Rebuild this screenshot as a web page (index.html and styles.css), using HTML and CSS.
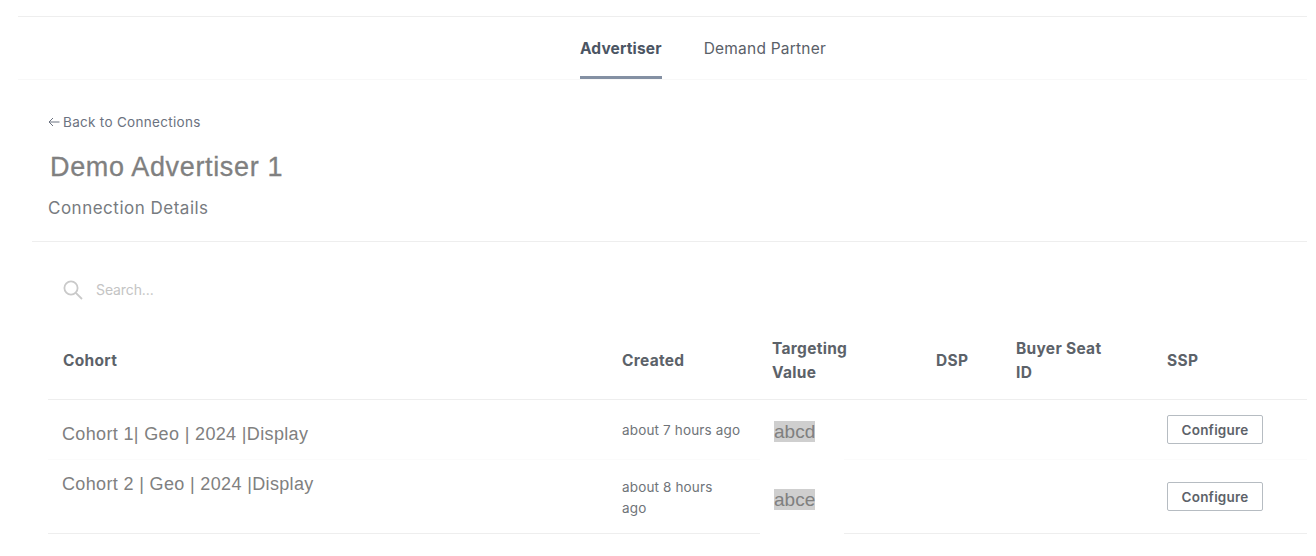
FILE: index.html
```html
<!DOCTYPE html>
<html lang="en">
<head>
    <meta charset="UTF-8">
    <meta name="viewport" content="width=device-width, initial-scale=1.0">
    <title>Connection Details</title>
    <link rel="stylesheet" href="styles.css">
</head>
<body>
    <nav class="tabs">
        <a class="tab active">Advertiser</a>
        <a class="tab">Demand Partner</a>
    </nav>

    <div class="content">
        <a class="back-link"><svg class="back-arrow" width="12" height="10" viewBox="0 0 12 10" fill="none" stroke="#6b7280" stroke-width="1"><path d="M11.5 5H1M5 1L1 5l4 4"/></svg>Back to Connections</a>
        <h1 class="page-title">Demo Advertiser 1</h1>
        <h2 class="page-subtitle">Connection Details</h2>
    </div>

    <div class="details">
        <div class="search">
            <svg width="20" height="20" viewBox="0 0 20 20" fill="none" stroke="#c9c9c9" stroke-width="1.8"><circle cx="8" cy="8" r="6.6"/><path d="M12.8 12.8L19 19"/></svg>
            <span class="search-text">Search...</span>
        </div>

        <table class="cohorts">
            <thead>
                <tr>
                    <th class="col-cohort">Cohort</th>
                    <th class="col-created">Created</th>
                    <th class="col-value">Targeting<br>Value</th>
                    <th class="col-dsp">DSP</th>
                    <th class="col-seat">Buyer Seat<br>ID</th>
                    <th class="col-ssp">SSP</th>
                </tr>
            </thead>
            <tbody>
                <tr class="row-one">
                    <td class="cohort-name">Cohort 1| Geo | 2024 |Display</td>
                    <td class="created">about 7 hours ago</td>
                    <td class="value-cell"><mark class="value">abcd</mark></td>
                    <td></td>
                    <td></td>
                    <td><button class="configure">Configure</button></td>
                </tr>
                <tr class="row-two">
                    <td class="cohort-name">Cohort 2 | Geo | 2024 |Display</td>
                    <td class="created">about 8 hours<br>ago</td>
                    <td class="value-cell"><mark class="value">abce</mark></td>
                    <td></td>
                    <td></td>
                    <td><button class="configure">Configure</button></td>
                </tr>
            </tbody>
        </table>
    </div>
</body>
</html>
```

FILE: styles.css
```css
body {
    margin: 0;
    padding: 16px 9px 0 0;
    font-family: 'Inter', 'Liberation Sans', sans-serif;
    color: #4b5563;
    background: #fff;
}
.tabs {
    display: flex;
    gap: 42px;
    height: 62px;
    margin-left: 18px;
    padding-left: 562px;
    border-top: 1px solid #eeeeee;
    border-bottom: 1px solid #f8f8f8;
}
.tab {
    display: block;
    height: 59px;
    line-height: 64px;
    font-size: 15.5px;
    letter-spacing: 0.22px;
    color: #5a6068;
}
.tab.active {
    font-weight: 700;
    letter-spacing: 0.15px;
    color: #4b5563;
    border-bottom: 3px solid #8490a3;
}
.content {
    padding: 32px 0 0 48px;
}
.back-link {
    display: flex;
    align-items: center;
    gap: 3px;
    height: 20px;
    font-size: 13.5px;
    letter-spacing: 0.3px;
    color: #6b7280;
}
.page-title {
    margin: 19px 0 0 2px;
    height: 32px;
    line-height: 32px;
    font-family: 'Liberation Sans', sans-serif;
    font-size: 27px;
    font-weight: 400;
    letter-spacing: 0.65px;
    color: #808080;
    -webkit-text-stroke: 0.3px #808080;
}
.page-subtitle {
    margin: 13px 0 0;
    height: 24px;
    line-height: 24px;
    font-size: 17px;
    font-weight: 400;
    letter-spacing: 0.5px;
    color: #777b80;
}
.details {
    margin: 21px 0 0 32px;
    padding: 0 0 0 16px;
    border-top: 1px solid #eeeeee;
}
.search {
    display: flex;
    align-items: center;
    gap: 13px;
    box-sizing: border-box;
    height: 87px;
    padding: 8px 0 0 15px;
}
.search-text {
    font-size: 14px;
    letter-spacing: -0.1px;
    color: #c4c4c4;
}
.cohorts {
    width: 100%;
    table-layout: fixed;
    border-collapse: collapse;
}
.cohorts th {
    height: 64px;
    padding: 0 0 6px;
    text-align: left;
    vertical-align: middle;
    font-size: 15.5px;
    line-height: 24px;
    font-weight: 700;
    letter-spacing: 0.3px;
    color: #5c6269;
    border-bottom: 1px solid #eeeeee;
}
.col-cohort { width: 559px; padding-left: 15px !important; }
.col-created { width: 150px; }
.col-value { width: 164px; }
.col-dsp { width: 80px; }
.col-seat { width: 151px; }
.cohorts td {
    box-sizing: border-box;
    padding: 0;
    vertical-align: middle;
}
.row-one td { height: 60px; border-bottom: 1px solid #fbfbfb; }
.row-two td { height: 74px; border-bottom: 1px solid #eeeeee; }
.cohort-name {
    padding-left: 14px !important;
    font-family: 'Liberation Sans', sans-serif;
    font-size: 18px;
    letter-spacing: 0.35px;
    color: #808080;
}
.row-one .cohort-name { padding-top: 10px !important; }
.row-two .cohort-name { padding-bottom: 25px !important; }
.created {
    padding: 2px 10px 0 0 !important;
    font-size: 13.5px;
    line-height: 21px;
    letter-spacing: 0.15px;
    color: #6f7479;
}
.value-cell {
    position: relative;
}
.row-one .value-cell { padding-top: 4px !important; }
.row-two .value-cell { padding-top: 6px !important; }
/* the rule under this column stops short in the design */
.value-cell::after {
    content: '';
    position: absolute;
    left: -12px;
    bottom: -1px;
    width: 84px;
    height: 2px;
    background: #fff;
}
.value {
    margin-left: 2px;
    padding: 0;
    font-family: 'Liberation Sans', sans-serif;
    font-size: 19px;
    background: #cfcfcf;
    color: #808080;
}
.configure {
    display: block;
    width: 96px;
    height: 29px;
    padding: 0;
    font-family: inherit;
    font-size: 13.5px;
    font-weight: 600;
    letter-spacing: 0.2px;
    color: #5c6269;
    background: #fff;
    border: 1px solid #b6bcc2;
    border-radius: 2px;
}
```
